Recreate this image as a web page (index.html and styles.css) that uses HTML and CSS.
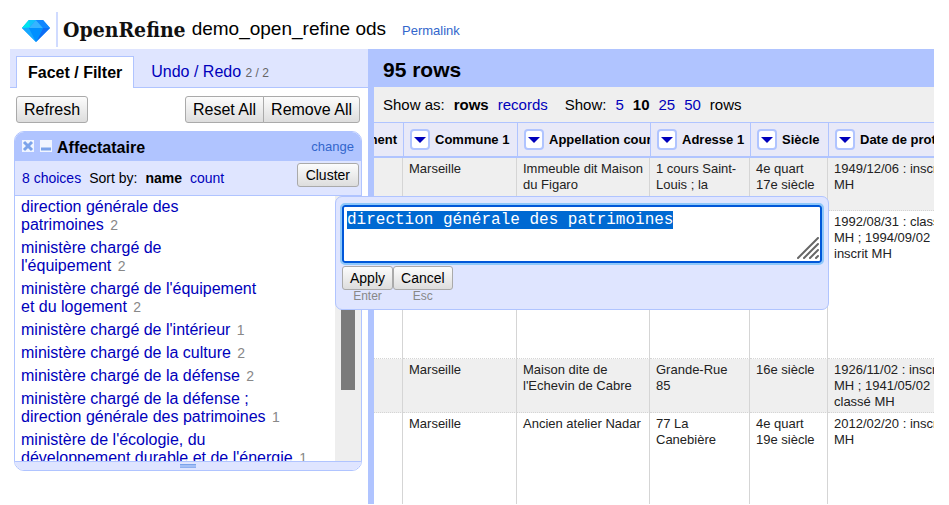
FILE: index.html
```html
<!DOCTYPE html>
<html lang="fr">
<head>
<meta charset="utf-8">
<title>demo_open_refine ods - OpenRefine</title>
<link rel="stylesheet" href="styles.css">
</head>
<body>
<header class="top">
  <a class="gem" href="#" aria-label="Home">
    <svg width="28" height="22" viewBox="0 0 28 22">
      <path fill="#0a9bff" d="M7 0h14l7 8-14 14L0 8z"/>
      <path fill="#12c3fa" d="M7 0 0 8h7l7-8z"/>
      <path fill="#00e5ee" d="M7 0 0 8l8-1z"/>
      <path fill="#37b4ff" d="M14 0 7 8h14z"/>
      <path fill="#1187ff" d="M14 0h7l7 8h-7z"/>
      <path fill="#0d6df5" d="M21 8h7L14 22z"/>
      <path fill="#16a8ff" d="M0 8h7l7 14z"/>
      <path fill="#0090ff" d="M7 8h14l-7 14z"/>
    </svg>
  </a>
  <span class="brand">OpenRefine</span>
  <h1 class="project">demo_open_refine ods</h1>
  <a class="permalink" href="#">Permalink</a>
</header>

<main class="work">
  <aside class="side">
    <nav class="tabs">
      <a class="tab active" href="#">Facet / Filter</a>
      <a class="tab" href="#">Undo / Redo <small>2 / 2</small></a>
    </nav>
    <div class="actions">
      <button class="btn" type="button">Refresh</button>
      <div class="group">
        <button class="btn" type="button">Reset All</button><button class="btn" type="button">Remove All</button>
      </div>
    </div>
    <section class="facet">
      <div class="facet-head">
        <button class="icon" type="button" aria-label="Remove facet">
          <svg width="12" height="12" viewBox="0 0 12 12"><path d="M2 2l8 8M10 2l-8 8" stroke="#7ba3ea" stroke-width="3"/></svg>
        </button>
        <button class="icon" type="button" aria-label="Minimize facet">
          <svg width="12" height="12" viewBox="0 0 12 12"><path d="M1 9h10" stroke="#7ba3ea" stroke-width="3"/></svg>
        </button>
        <h2>Affectataire</h2>
        <a class="change" href="#">change</a>
      </div>
      <div class="facet-controls">
        <a href="#">8 choices</a>
        <span>Sort by:</span>
        <b>name</b>
        <a href="#">count</a>
        <button class="btn small" type="button">Cluster</button>
      </div>
      <div class="facet-body">
        <ul class="choices">
          <li><a href="#">direction générale des<br>patrimoines</a> <span>2</span></li>
          <li><a href="#">ministère chargé de<br>l'équipement</a> <span>2</span></li>
          <li><a href="#">ministère chargé de l'équipement<br>et du logement</a> <span>2</span></li>
          <li><a href="#">ministère chargé de l'intérieur</a> <span>1</span></li>
          <li><a href="#">ministère chargé de la culture</a> <span>2</span></li>
          <li><a href="#">ministère chargé de la défense</a> <span>2</span></li>
          <li><a href="#">ministère chargé de la défense ;<br>direction générale des patrimoines</a> <span>1</span></li>
          <li><a href="#">ministère de l'écologie, du<br>développement durable et de l'énergie</a> <span>1</span></li>
        </ul>
        <div class="track"><div class="thumb"></div></div>
      </div>
      <div class="facet-foot"><div class="grip"></div></div>
    </section>
  </aside>

  <section class="view">
    <h2 class="count">95 rows</h2>
    <div class="paging">
      <span>Show as:</span>
      <b>rows</b>
      <a href="#">records</a>
      <span class="show">Show:</span>
      <a href="#">5</a>
      <b>10</b>
      <a href="#">25</a>
      <a href="#">50</a>
      <span>rows</span>
    </div>
    <div class="grid">
      <table>
        <colgroup><col class="c0"><col class="c1"><col class="c2"><col class="c3"><col class="c4"><col></colgroup>
        <thead>
          <tr>
            <th><div class="th end">Département</div></th>
            <th><div class="th"><button class="menu" type="button" aria-label="Commune 1"></button>Commune 1</div></th>
            <th><div class="th"><button class="menu" type="button" aria-label="Appellation courante"></button>Appellation courante</div></th>
            <th><div class="th"><button class="menu" type="button" aria-label="Adresse 1"></button>Adresse 1</div></th>
            <th><div class="th"><button class="menu" type="button" aria-label="Siècle"></button>Siècle</div></th>
            <th><div class="th"><button class="menu" type="button" aria-label="Date de protection"></button>Date de protection</div></th>
          </tr>
        </thead>
        <tbody>
          <tr><td></td><td>Marseille</td><td>Immeuble dit Maison du Figaro</td><td>1 cours Saint-Louis ; la Canebière</td><td>4e quart 17e siècle</td><td class="date">1949/12/06 : inscrit<br>MH</td></tr>
          <tr class="tall"><td></td><td></td><td></td><td></td><td></td><td class="date">1992/08/31 : classé<br>MH ; 1994/09/02 :<br>inscrit MH</td></tr>
          <tr class="mid"><td></td><td>Marseille</td><td>Maison dite de l'Echevin de Cabre</td><td>Grande-Rue 85</td><td>16e siècle</td><td class="date">1926/11/02 : inscrit<br>MH ; 1941/05/02 :<br>classé MH</td></tr>
          <tr class="last"><td></td><td>Marseille</td><td>Ancien atelier Nadar</td><td>77 La Canebière</td><td>4e quart 19e siècle</td><td class="date">2012/02/20 : inscrit<br>MH</td></tr>
        </tbody>
      </table>
    </div>
  </section>
</main>

<form class="editor">
  <div class="field">
    <textarea id="value" aria-label="Value" spellcheck="false" autofocus>direction générale des patrimoines</textarea>
    <svg class="resizer" width="22" height="22" viewBox="0 0 22 22"><path d="M1 21 21 1M7 21 21 7M13 21l8-8M19 21l2-2" stroke="#666" stroke-width="2" stroke-linecap="round"/></svg>
  </div>
  <div class="choices-row">
    <div class="key"><button class="btn small" type="button">Apply</button><span>Enter</span></div>
    <div class="key"><button class="btn small" type="button">Cancel</button><span>Esc</span></div>
  </div>
</form>
<script src="main.js"></script>
</body>
</html>
```

FILE: main.js
```js
const field = document.getElementById('value');
field.focus();
field.select();
```

FILE: styles.css
```css
* { box-sizing: border-box; }
body {
  margin: 0;
  padding: 0 15px 1px 10px;
  height: 100vh;
  display: flex;
  flex-direction: column;
  overflow: hidden;
  background: #fff;
  color: #000;
  font: 16px "Liberation Sans", Arial, sans-serif;
}
a { color: #00b; text-decoration: none; }
h1, h2 { margin: 0; }

.top {
  height: 49px;
  flex: none;
  display: flex;
  align-items: center;
  padding-top: 9px;
}
.gem {
  height: 35px;
  padding: 8px 6px 0 12px;
  border-right: 2px solid #d0dbff;
}
.gem svg { display: block; }
.brand {
  margin-left: 5px;
  font: bold 21px "DejaVu Serif Condensed", "DejaVu Serif", serif;
  color: #111;
}
.project { margin-left: 6px; font-size: 19px; font-weight: normal; }
.permalink { margin-left: 16px; padding-top: 2px; font-size: 13px; color: #36c; }

.work { flex: 1; min-height: 0; display: flex; }
.side { flex: none; width: 358px; }
.tabs {
  height: 39px;
  display: flex;
  align-items: flex-end;
  padding-left: 6px;
  background: #dfe5ff;
  border-bottom: 1px solid #b0c4ff;
}
.tab {
  height: 32px;
  padding: 0 17px;
  line-height: 34px;
}
.tab.active {
  margin-bottom: -1px;
  padding: 0 11px;
  line-height: 32px;
  background: #fff;
  border: 1px solid #b0c4ff;
  border-bottom: 0;
  color: #000;
  font-weight: bold;
}
.tab small { font-size: 12px; color: #666; }

.btn {
  height: 27px;
  padding: 0 7px;
  border: 1px solid #aaa;
  border-radius: 3px;
  background: linear-gradient(#fcfcfc, #ddd);
  color: #000;
  font: 16px "Liberation Sans", Arial, sans-serif;
}
.btn.small { height: 24px; font-size: 14px; }
.actions {
  display: flex;
  justify-content: space-between;
  padding: 8px 8px 8px 6px;
}
.group { display: flex; }
.group .btn:first-child { border-radius: 3px 0 0 3px; }
.group .btn:last-child { border-radius: 0 3px 3px 0; margin-left: -1px; }

.facet {
  margin: 0 6px 0 4px;
  border: 1px solid #b0c4ff;
  border-radius: 10px;
  overflow: hidden;
}
.facet-head {
  height: 29px;
  display: flex;
  align-items: center;
  padding: 0 7px;
  background: #b0c4ff;
}
.facet-head h2 { font-size: 16px; padding-top: 2px; }
.icon {
  width: 12px;
  height: 12px;
  margin: 0 6px 2px 0;
  padding: 0;
  border: 0;
  background: #f0f5ff;
}
.icon + h2 { margin-left: -1px; }
.icon svg { display: block; }
.change { margin-left: auto; font-size: 13px; color: #36c; }
.facet-controls {
  height: 35px;
  display: flex;
  align-items: center;
  gap: 8px;
  padding: 0 2px 0 7px;
  background: #dfe5ff;
  border-bottom: 1px solid #b0c4ff;
  font-size: 14px;
}
.facet-controls .btn { margin: 0 0 6px auto; padding: 0 8px; }
.facet-body { height: 265px; display: flex; overflow: hidden; }
.choices { flex: 1; margin: 0; padding: 0 0 0 6px; list-style: none; }
.choices li { padding: 2px 0 3px; line-height: 18px; }
.choices span { margin-left: 2px; font-size: 14px; color: #888; }
.track { width: 26px; height: 265px; padding: 18px 6px 0; background: #eee; }
.thumb { height: 176px; background: #7b7b7b; }
.facet-foot {
  height: 9px;
  padding-top: 2px;
  background: #dfe5ff;
  border-top: 1px solid #b0c4ff;
}
.grip {
  width: 16px;
  height: 4px;
  margin: 0 auto;
  background: #a4bff5;
  border-top: 1px solid #7ba3ea;
  border-bottom: 1px solid #8fb0f0;
}

.view {
  flex: 1;
  min-width: 0;
  display: flex;
  flex-direction: column;
  border-left: 6px solid #b0c4ff;
}
.count {
  flex: none;
  height: 38px;
  padding: 2px 9px 0;
  line-height: 38px;
  background: #b0c4ff;
  font-size: 21px;
}
.paging {
  flex: none;
  height: 35px;
  display: flex;
  align-items: center;
  gap: 9px;
  padding: 0 9px;
  background: #efefef;
  font-size: 15px;
}
.paging .show { margin-left: 8px; }

.grid { flex: 1; min-height: 0; overflow: hidden; }
table {
  width: 100%;
  height: 100%;
  table-layout: fixed;
  border-collapse: separate;
  border-spacing: 0;
  font-size: 13px;
}
.c0 { width: 29px; }
.c1 { width: 114px; }
.c2 { width: 133px; }
.c3 { width: 100px; }
.c4 { width: 78px; }
th {
  height: 36px;
  padding: 0;
  background: #e8e9f8;
  border: 1px solid #b0c4ff;
  border-width: 1px 0 2px 1px;
}
th:first-child { border-left: 0; }
.th {
  display: flex;
  align-items: center;
  gap: 5px;
  padding-left: 6px;
  height: 33px;
  overflow: hidden;
  white-space: nowrap;
}
.th.end { justify-content: flex-end; padding: 0 6px 0 0; }
.menu {
  flex: none;
  width: 20px;
  height: 21px;
  padding: 0;
  border: 2px solid #b0c4ff;
  border-radius: 4px;
  background: #fff;
}
.menu::before {
  content: "";
  display: block;
  width: 0;
  margin: 0 auto;
  border: 6px solid transparent;
  border-top-color: #00b;
  border-bottom: 0;
}
td {
  height: 53px;
  padding: 3px 5px 1px 6px;
  vertical-align: top;
  line-height: 16px;
  color: #222;
  border-right: 1px solid #d5d5d5;
  border-bottom: 1px dotted #d5d5d5;
}
td:last-child { border-right: 0; }
tr:nth-child(odd) td { background: #efefef; }
.tall td { height: 148px; }
.mid td { height: 54px; }
.last td { height: auto; border-bottom: 0; }
td.date { overflow: hidden; white-space: nowrap; padding-right: 0; }

.editor {
  position: absolute;
  left: 335px;
  top: 196px;
  width: 494px;
  padding: 8px 6px 7px;
  background: #dfe5ff;
  border: 1px solid #b0c4ff;
  border-radius: 7px;
}
.field { position: relative; }
textarea {
  display: block;
  width: 100%;
  height: 58px;
  padding: 4px 3px;
  border: 2px solid #0057d9;
  border-radius: 3px;
  outline: 2px solid #8ec8fa;
  resize: none;
  overflow: hidden;
  background: #fff;
  font: 16px "Liberation Mono", monospace;
}
textarea::selection { background: #0069d2; color: #fff; }
.resizer { position: absolute; right: 3px; bottom: 4px; }
.choices-row { display: flex; padding-top: 3px; }
.key { display: flex; flex-direction: column; align-items: center; }
.key span { font-size: 12px; line-height: 12px; color: #888; }
```
